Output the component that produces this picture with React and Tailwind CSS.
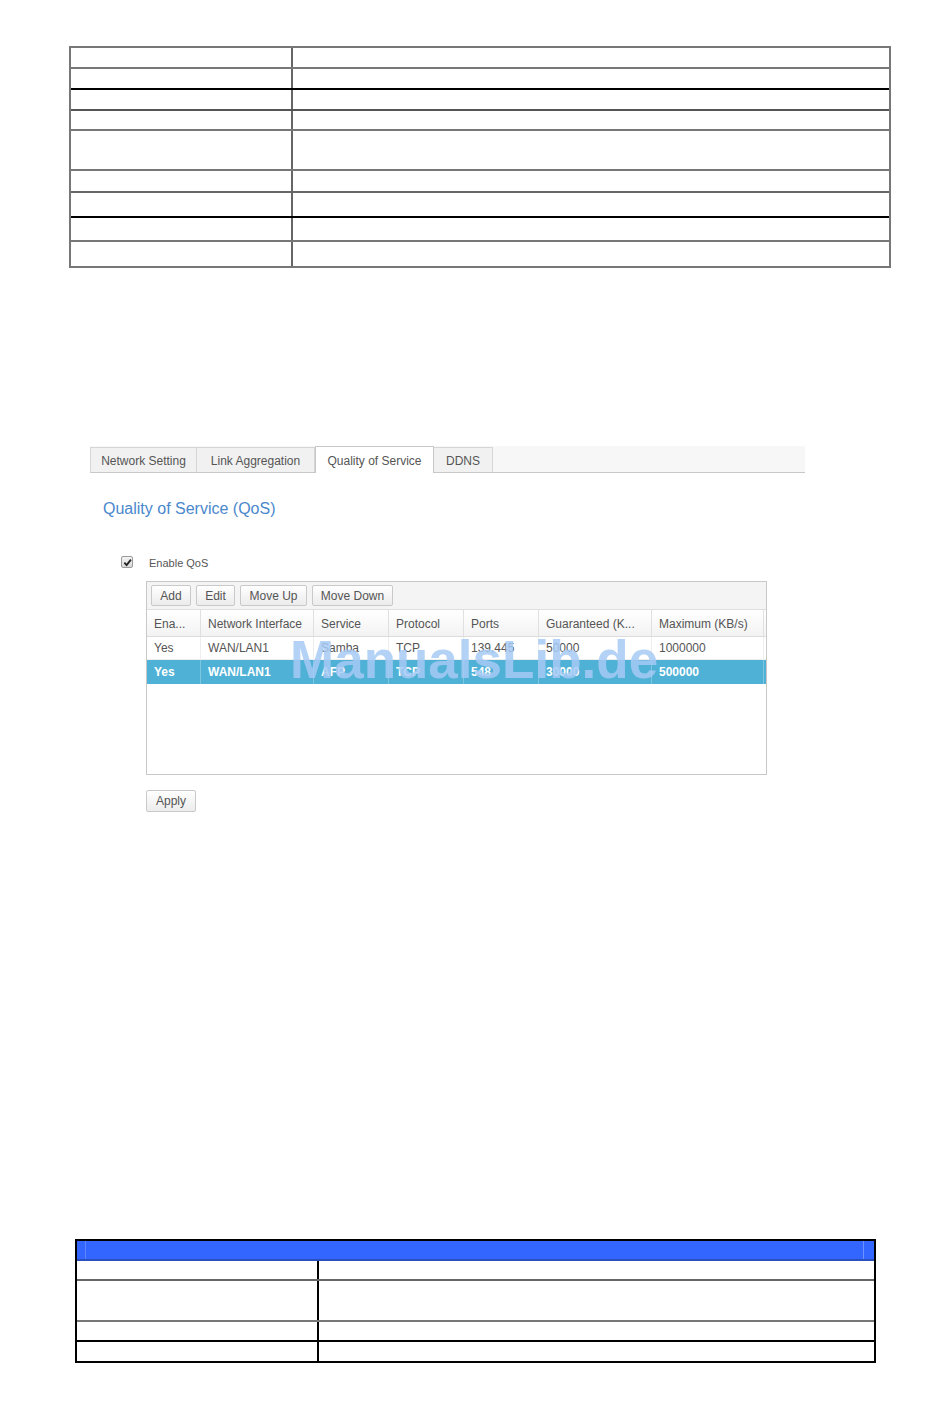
const TOP_ROWS = [
  { h: 'h-[21px]', line: 'border-[#777]' },
  { h: 'h-[21px]', line: 'border-black' },
  { h: 'h-[21px]', line: 'border-[#555]' },
  { h: 'h-[20px]', line: 'border-[#777]' },
  { h: 'h-[40px]', line: 'border-[#777]' },
  { h: 'h-[22px]', line: 'border-[#666]' },
  { h: 'h-[25px]', line: 'border-black' },
  { h: 'h-[24px]', line: 'border-[#777]' },
  { h: 'h-[26px]', line: 'border-[#777]' },
];

const BOTTOM_ROWS = [
  { h: 'h-[20px]', line: 'border-[#666]' },
  { h: 'h-[41px]', line: 'border-[#777]' },
  { h: 'h-[20px]', line: 'border-black' },
  { h: 'h-[21px]', line: 'border-black' },
];

const TABS = [
  { label: 'Network Setting', w: 'w-[107px]' },
  { label: 'Link Aggregation', w: 'w-[118px]' },
  { label: 'Quality of Service', w: 'w-[119px]', active: true },
  { label: 'DDNS', w: 'w-[59px]' },
];

const COLS = [
  { label: 'Ena...', w: 'w-[54px]' },
  { label: 'Network Interface', w: 'w-[113px]' },
  { label: 'Service', w: 'w-[75px]' },
  { label: 'Protocol', w: 'w-[75px]' },
  { label: 'Ports', w: 'w-[75px]' },
  { label: 'Guaranteed (K...', w: 'w-[113px]' },
  { label: 'Maximum (KB/s)', w: 'w-[112px]' },
];

const ROWS = [
  ['Yes', 'WAN/LAN1', 'Samba', 'TCP', '139,445', '50000', '1000000'],
  ['Yes', 'WAN/LAN1', 'AFP', 'TCP', '548', '30000', '500000'],
];

function Btn({ children, w }) {
  return (
    <button className={`${w} h-[21px] border border-[#c9c9c9] rounded-[2px] bg-gradient-to-b from-white to-[#ececec] text-[12px] text-[#555] leading-none`}>
      {children}
    </button>
  );
}

export default function App() {
  return (
    <div className="relative w-[950px] h-[1419px] bg-white font-['Liberation_Sans',Arial,sans-serif] overflow-hidden">
      {/* top blank table */}
      <div className="ml-[69px] mt-[46px] w-[822px] border-t-2 border-x-2 border-[#777]">
        {TOP_ROWS.map((r, i) => (
          <div key={i} className={`flex ${r.h} border-b-2 ${r.line}`}>
            <div className="w-[222px] border-r-2 border-[#666]" />
            <div className="flex-1" />
          </div>
        ))}
      </div>

      {/* tab bar */}
      <div className="ml-[90px] mt-[178px] w-[715px] h-[27px] flex items-end bg-[#f7f7f7] border-b border-[#c8c8c8]">
        {TABS.map((t) =>
          t.active ? (
            <div key={t.label} className={`${t.w} h-[27px] -mb-px bg-white border border-b-0 border-[#c8c8c8] flex items-center justify-center pt-[1px] text-[12px] text-[#555]`}>
              {t.label}
            </div>
          ) : (
            <div key={t.label} className={`${t.w} h-[25px] bg-[#f1f1f1] border-r border-t border-[#d6d6d6] first:border-l flex items-center justify-center pt-[1px] text-[12px] text-[#555]`}>
              {t.label}
            </div>
          )
        )}
      </div>

      {/* heading */}
      <div className="ml-[103px] mt-[26px] text-[16px] leading-[20px] text-[#4a88cc]">Quality of Service (QoS)</div>

      {/* enable checkbox */}
      <div className="ml-[121px] mt-[36px] flex items-center h-[14px]">
        <div className="w-[12px] h-[12px] border border-[#9a9a9a] rounded-[2px] bg-gradient-to-b from-[#f4f4f4] to-[#d8d8d8] flex items-center justify-center">
          <svg width="9" height="9" viewBox="0 0 10 10">
            <path d="M1.5 5.2 L4 7.8 L8.8 1.8" fill="none" stroke="#222" strokeWidth="2" />
          </svg>
        </div>
        <span className="ml-[16px] mt-[3px] text-[11px] text-[#555]">Enable QoS</span>
      </div>

      {/* grid panel */}
      <div className="ml-[146px] mt-[12px] w-[621px] h-[194px] border border-[#c8c8c8] flex flex-col">
        <div className="h-[28px] bg-[#f4f4f4] border-b border-[#dedede] flex items-center gap-[5px] pl-[4px]">
          <Btn w="w-[40px]">Add</Btn>
          <Btn w="w-[39px]">Edit</Btn>
          <Btn w="w-[67px]">Move Up</Btn>
          <Btn w="w-[81px]">Move Down</Btn>
        </div>
        <div className="flex h-[27px] bg-gradient-to-b from-white to-[#f3f3f3] border-b border-[#dcdcdc]">
          {COLS.map((c) => (
            <div key={c.label} className={`${c.w} border-r border-[#e0e0e0] flex items-center pl-[7px] pt-[1px] text-[12px] text-[#555] whitespace-nowrap overflow-hidden`}>
              {c.label}
            </div>
          ))}
        </div>
        {ROWS.map((row, ri) => (
          <div
            key={ri}
            className={`flex ${ri === 0 ? 'h-[23px] bg-white text-[#555] border-b border-[#eeeeee]' : 'h-[24px] bg-[#4fb1d5] text-white font-bold'}`}
          >
            {row.map((v, ci) => (
              <div key={ci} className={`${COLS[ci].w} ${ri === 0 ? 'border-r border-[#eeeeee]' : 'border-r border-[#7cc6e0]'} flex items-center pl-[7px] text-[12px] whitespace-nowrap overflow-hidden`}>
                {v}
              </div>
            ))}
          </div>
        ))}
      </div>

      {/* apply */}
      <div className="ml-[146px] mt-[13px]">
        <button className="w-[50px] h-[22px] border border-[#c9c9c9] rounded-[2px] bg-gradient-to-b from-white to-[#ececec] text-[12px] text-[#555] leading-none">
          Apply
        </button>
      </div>

      {/* bottom blank table */}
      <div className="ml-[75px] mt-[427px] w-[801px] border-t-2 border-x-2 border-black">
        <div className="relative h-[20px] bg-[#3366ff] border-b-2 border-[#2a4fbf]">
          <div className="absolute left-[8px] top-0 bottom-0 w-px bg-[#5c86ff]" />
          <div className="absolute right-[10px] top-0 bottom-0 w-px bg-[#6b92ff]" />
        </div>
        {BOTTOM_ROWS.map((r, i) => (
          <div key={i} className={`flex ${r.h} border-b-2 ${r.line}`}>
            <div className="w-[242px] border-r-2 border-black" />
            <div className="flex-1" />
          </div>
        ))}
      </div>

      {/* watermark */}
      <div className="absolute left-[290px] top-[633px] text-[53px] leading-none font-bold text-[#a6caf4]/85 pointer-events-none select-none whitespace-nowrap">
        ManualsLib.de
      </div>
    </div>
  );
}
